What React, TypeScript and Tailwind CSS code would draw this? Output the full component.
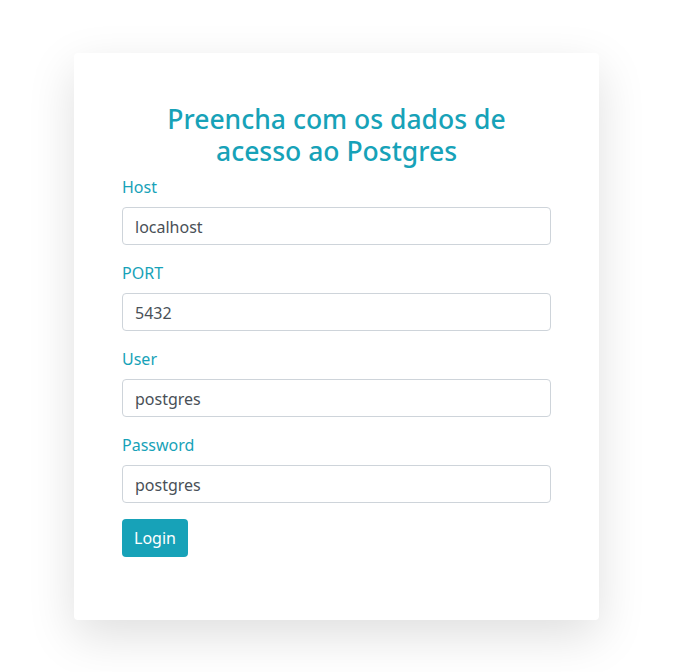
import React from "react";

const fields = [
  { label: "Host", value: "localhost" },
  { label: "PORT", value: "5432" },
  { label: "User", value: "postgres" },
  { label: "Password", value: "postgres" },
];

export default function App() {
  return (
    <div
      className="min-h-[672px] w-[688px] bg-white pt-[53px] pl-[74px]"
      style={{ fontFamily: '"Noto Sans", "Open Sans", sans-serif' }}
    >
      <div className="w-[525px] h-[567px] rounded-[4px] bg-white px-[48px] pt-[48px] shadow-[0_16px_48px_rgba(0,0,0,0.13)]">
        <h3 className="mt-[2px] mb-[8px] text-center text-[26.5px] leading-[32px] font-medium text-[#17a2b8]">
          Preencha com os dados de
          <br />
          acesso ao Postgres
        </h3>
        <form onSubmit={(e) => e.preventDefault()}>
          {fields.map((f) => (
            <div key={f.label} className="mb-[16px]">
              <label className="mb-[8px] block text-[16px] leading-[24px] text-[#17a2b8]">
                {f.label}
              </label>
              <input
                type="text"
                defaultValue={f.value}
                className="block h-[38px] w-full rounded-[4px] border border-[#ced4da] bg-white px-[12px] pt-[1px] text-[16px] text-[#495057] outline-none"
              />
            </div>
          ))}
          <button
            type="submit"
            className="h-[38px] rounded-[4px] bg-[#17a2b8] px-[12px] text-[16px] leading-[24px] text-white"
          >
            Login
          </button>
        </form>
      </div>
    </div>
  );
}
